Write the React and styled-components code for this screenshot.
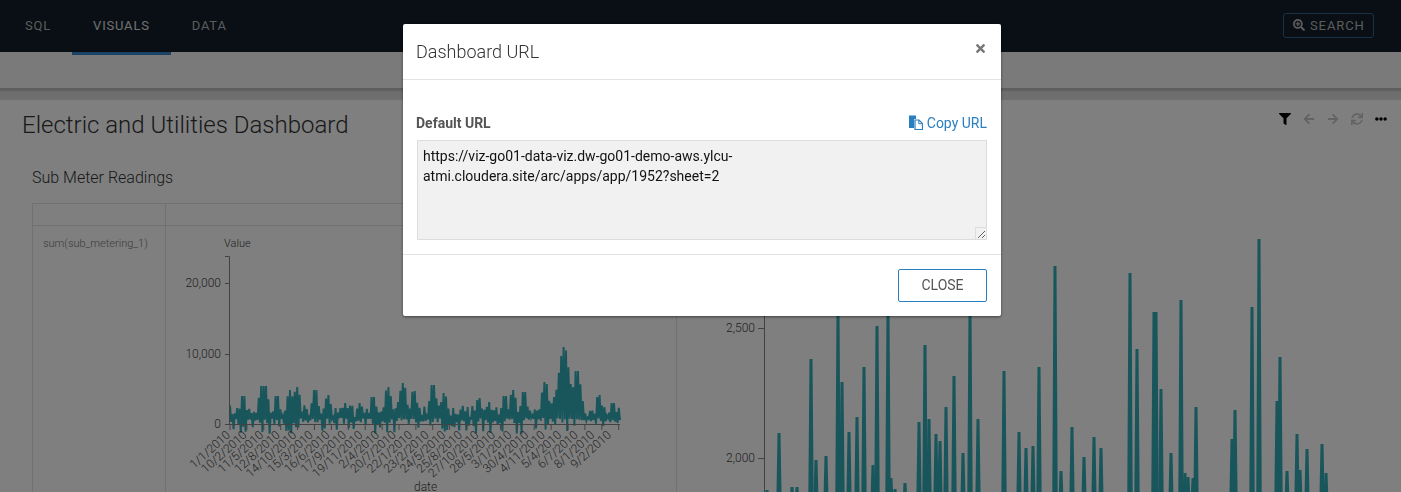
import React from 'react'
import styled, { createGlobalStyle } from 'styled-components'
import { FaSearchPlus, FaFilter, FaArrowLeft, FaArrowRight, FaSync, FaEllipsisH, FaTimes } from 'react-icons/fa'

const GlobalStyle = createGlobalStyle`
  html, body {
    margin: 0;
    height: 100%;
    overflow: hidden;
    background: #fff;
    font-family: Roboto, "Liberation Sans", sans-serif;
  }
  * { box-sizing: border-box; }
`

const TEAL = '#32acb8'
const AXIS = '#858585'
const TEXT = '#444'

const Page = styled.div`
  height: 492px;
  overflow: hidden;
`

const Nav = styled.nav`
  height: 52px;
  background: #121e28;
  display: flex;
  align-items: stretch;
  justify-content: space-between;
  padding: 0 27px 0 4px;
`

const Tabs = styled.div`
  display: flex;
`

const Tab = styled.div`
  height: 55px;
  padding: 0 21px 1px;
  display: flex;
  align-items: center;
  font-size: 13px;
  letter-spacing: 0.8px;
  color: ${p => (p.$active ? '#e0e0e0' : '#b8b8b8')};
  border-bottom: 3px solid ${p => (p.$active ? '#3584c8' : 'transparent')};
  position: relative;
  z-index: 1;
`

const SearchButton = styled.div`
  align-self: center;
  margin-bottom: 2px;
  width: 91px;
  height: 25px;
  border: 1px solid #34608a;
  border-radius: 3px;
  display: flex;
  align-items: center;
  gap: 5px;
  padding-left: 9px;
  font-size: 13px;
  letter-spacing: 0.9px;
  color: #b8b8b8;
  svg { width: 12px; height: 12px; }
`

const SubBar = styled.div`
  height: 36px;
  background: #f4f4f4;
`

const Band = styled.div`
  height: 12px;
  background: linear-gradient(#bcbcbc 0, #bcbcbc 2px, #dcdcdc 4px, #dedede 100%);
`

const Panel = styled.section`
  margin-left: 2px;
  height: 392px;
  background: #fff;
  padding: 0 0 0 20px;
`

const TitleRow = styled.div`
  height: 48px;
  display: flex;
  align-items: flex-start;
  justify-content: space-between;
  padding: 11px 14px 0 0;
`

const Title = styled.h1`
  margin: 0;
  font-size: 24px;
  line-height: 29px;
  font-weight: 300;
  color: #333;
`

const Tools = styled.div`
  display: flex;
  align-items: center;
  gap: 12px;
  height: 15px;
  color: #000;
`

const Tool = styled.span`
  display: flex;
  color: ${p => (p.$muted ? '#c6c6c6' : '#000')};
  svg { width: 12px; height: 12px; }
`

const ChartTitle = styled.h2`
  margin: 0 0 0 10px;
  height: 55px;
  padding-top: 20px;
  font-size: 16px;
  line-height: 19px;
  font-weight: 300;
  color: #333;
`

const TrellisHead = styled.div`
  margin-left: 10px;
  width: 960px;
  height: 23px;
  border: 1px solid #dfe3e8;
  display: grid;
  grid-template-columns: 133px 1fr;
`

const HeadCell = styled.div`
  border-right: 1px solid #dfe3e8;
  &:last-child { border-right: 0; }
`

const TrellisRow = styled.div`
  margin-left: 10px;
  display: grid;
  grid-template-columns: 133px 511px 1fr;
  height: 266px;
  border-left: 1px solid #dfe3e8;
`

const RowLabel = styled.div`
  border-right: 1px solid #dfe3e8;
  padding: 11px 0 0 10px;
  font-size: 11px;
  line-height: 13px;
  font-weight: 300;
  color: #777;
`

const ChartCell = styled.div`
  border-right: 1px solid #dfe3e8;
  &:last-child { border-right: 0; }
  svg { display: block; overflow: visible; }
  text {
    font-family: Roboto, "Liberation Sans", sans-serif;
    font-weight: 300;
    fill: ${TEXT};
  }
`

const Overlay = styled.div`
  position: fixed;
  inset: 0;
  z-index: 10;
  background: rgba(0, 0, 0, 0.5);
  display: flex;
  align-items: flex-start;
  justify-content: center;
  padding: 24px 0 0 3px;
`

const Modal = styled.div`
  width: 598px;
  height: 292px;
  background: #fff;
  border-radius: 2px;
  box-shadow: 0 1px 3px rgba(0, 0, 0, 0.5);
  display: flex;
  flex-direction: column;
`

const ModalHeader = styled.header`
  height: 56px;
  border-bottom: 1px solid #e2e2e2;
  padding: 17px 14px 0 13px;
  display: flex;
  justify-content: space-between;
  align-items: flex-start;
`

const ModalTitle = styled.h3`
  margin: 0;
  font-size: 18px;
  line-height: 22px;
  font-weight: 300;
  color: #333;
`

const CloseX = styled.span`
  display: flex;
  margin: 1px 0 0;
  color: #777;
  svg { width: 13px; height: 13px; }
`

const ModalBody = styled.div`
  flex: 1;
  padding: 33px 14px 0;
`

const FieldHead = styled.div`
  display: flex;
  justify-content: space-between;
  align-items: center;
  height: 19px;
  margin-bottom: 8px;
`

const FieldLabel = styled.label`
  font-size: 14px;
  font-weight: 700;
  color: #555;
  margin-left: -1px;
`

const CopyLink = styled.a`
  display: flex;
  align-items: center;
  gap: 4px;
  font-size: 14px;
  color: #2a7fc0;
  svg { width: 14px; height: 15px; }
`

const UrlField = styled.div`
  position: relative;
  height: 100px;
  /* the boxed resize grip in the corner */
  &::after {
    content: '';
    position: absolute;
    right: 1px;
    bottom: 1px;
    width: 10px;
    height: 11px;
    border-left: 1px solid #ddd;
    border-top: 1px solid #ddd;
    pointer-events: none;
  }
`

const UrlBox = styled.textarea`
  display: block;
  width: 100%;
  height: 100px;
  margin: 0;
  padding: 5px 5px;
  border: 1px solid #ddd;
  border-radius: 0;
  background: #f1f1f1;
  color: #111;
  font-family: Roboto, "Liberation Sans", sans-serif;
  font-size: 14px;
  line-height: 20px;
  outline: none;
`

const ModalFooter = styled.footer`
  height: 62px;
  border-top: 1px solid #e2e2e2;
  padding: 14px 14px 0;
  display: flex;
  justify-content: flex-end;
`

const CloseButton = styled.button`
  width: 89px;
  height: 33px;
  padding: 0 0 2px;
  background: #fff;
  border: 1px solid #2a7fc0;
  border-radius: 2px;
  font-family: Roboto, "Liberation Sans", sans-serif;
  font-size: 14px;
  color: #555;
`

// small seeded generator so the wave form stays the same on every load
const seeded = seed => () => {
  seed = (seed * 16807) % 2147483647
  return seed / 2147483647
}

const LEFT_PEAKS = [
  [230, 408], [238, 408], [243, 396], [262, 386], [265, 386], [277, 396], [290, 390], [297, 387],
  [315, 390], [328, 395], [345, 403], [360, 403], [373, 397], [388, 387], [398, 402], [403, 383],
  [414, 391], [433, 385], [444, 393], [462, 410], [468, 416], [479, 398], [489, 402], [505, 396],
  [513, 390], [524, 392], [545, 382], [554, 397], [564, 347], [572, 394], [577, 371], [599, 395],
  [613, 403], [620, 412],
]

const buildLeftLine = () => {
  const rand = seeded(4711)
  const pts = []
  for (let x = 230, i = 0; x <= 621; x += 1.2, i++) {
    let y
    if (i % 2) {
      y = rand() > 0.75 ? 424 + rand() * 10 : 418 + rand() * 6
    } else {
      const cap = Math.min(...LEFT_PEAKS.map(([px, py]) => py + Math.max(0, Math.abs(x - px) - 1.5) * 7))
      y = Math.min(cap, 405 + rand() * 13)
    }
    pts.push(`${x.toFixed(1)},${y.toFixed(1)}`)
  }
  return pts.join(' ')
}

const DATES = [
  '1/1/2010', '10/2/2010', '11/5/2010', '12/8/2010', '14/10/2010', '15/3/2010', '16/6/2010', '17/9/2010',
  '19/11/2010', '2/4/2010', '20/7/2010', '22/1/2010', '23/2/2010', '24/5/2010', '25/8/2010', '27/10/2010',
  '28/5/2010', '3/1/2010', '30/4/2010', '4/11/2010', '5/4/2010', '6/7/2010', '8/1/2010', '9/2/2010',
]

const LeftChart = () => (
  <svg width="510" height="266" viewBox="166 226 510 266">
    <text x="224" y="247" fontSize="11">Value</text>
    <polyline points={buildLeftLine()} fill="none" stroke={TEAL} strokeWidth="2" />
    <path d="M225 256.500H229.500V424.500H620" fill="none" stroke={AXIS} strokeWidth="1" />
    {[[283, '20,000'], [354, '10,000'], [424, '0']].map(([y, label]) => (
      <g key={label}>
        <path d={`M225 ${y + 0.5}H229`} stroke={AXIS} />
        <text x="221" y={y + 4} fontSize="12" textAnchor="end">{label}</text>
      </g>
    ))}
    {DATES.map((d, i) => {
      const tick = 230 + i * 16.9
      const x = 231 + i * 16.56
      return (
        <g key={d}>
          <path d={`M${tick} 424V430`} stroke={AXIS} />
          <text x={x} y="436" fontSize="12" textAnchor="end" transform={`rotate(-42 ${x} 436)`}>{d}</text>
        </g>
      )
    })}
    <text x="414" y="491" fontSize="12">date</text>
  </svg>
)

const SPIKES = [
  [767, 490], [779, 433], [792, 487], [797, 487], [811, 359], [816, 460], [826, 456], [838, 310],
  [842, 382], [849, 432], [857, 417], [864, 367], [873, 465], [877, 326], [888, 310], [891, 478],
  [895, 489], [905, 483], [919, 422], [925, 345], [929, 419], [936, 434], [940, 441], [946, 407],
  [954, 376], [963, 453], [970, 310], [978, 419], [1004, 371], [1019, 432], [1026, 448], [1033, 446],
  [1039, 367], [1055, 266], [1061, 471], [1072, 427], [1084, 457], [1094, 437], [1101, 448],
  [1130, 273], [1137, 349], [1154, 312], [1156, 312], [1161, 389], [1171, 453], [1181, 300],
  [1185, 473], [1188, 477], [1193, 478], [1196, 407], [1232, 439], [1235, 410], [1252, 307],
  [1259, 239], [1277, 401], [1280, 357], [1287, 471], [1297, 434], [1300, 470], [1307, 449], [1322, 444], [1326, 473],
]

const RightChart = () => (
  <svg width="723" height="266" viewBox="677 226 723 266">
    {SPIKES.map(([x, y]) => (
      <path
        key={`${x}-${y}`}
        d={`M${x - 1.3} 510L${x} ${y}L${x + 1.3} 510`}
        fill={TEAL}
        stroke={TEAL}
        strokeWidth="3"
        strokeLinejoin="bevel"
      />
    ))}
    <path d="M764.500 226V492" fill="none" stroke={AXIS} />
    {[[328, '2,500'], [458, '2,000']].map(([y, label]) => (
      <g key={label}>
        <path d={`M758 ${y + 0.5}H764`} stroke={AXIS} />
        <text x="755" y={y + 4} fontSize="12" textAnchor="end">{label}</text>
      </g>
    ))}
  </svg>
)

const CopyIcon = () => (
  <svg viewBox="0 0 14 15">
    <path d="M0 0.500h7v3.500H5v9H0z" fill="currentColor" />
    <path d="M6 5h4l3.500 3.500v6H6z" fill="none" stroke="currentColor" strokeWidth="1.200" />
    <path d="M9.800 5v3.700H13.500" fill="none" stroke="currentColor" strokeWidth="1" />
  </svg>
)

const App = () => (
  <Page>
    <GlobalStyle />
    <Nav>
      <Tabs>
        <Tab>SQL</Tab>
        <Tab $active>VISUALS</Tab>
        <Tab>DATA</Tab>
      </Tabs>
      <SearchButton><FaSearchPlus /> SEARCH</SearchButton>
    </Nav>
    <SubBar />
    <Band />
    <Panel>
      <TitleRow>
        <Title>Electric and Utilities Dashboard</Title>
        <Tools>
          <Tool><FaFilter /></Tool>
          <Tool $muted><FaArrowLeft /></Tool>
          <Tool $muted><FaArrowRight /></Tool>
          <Tool $muted><FaSync /></Tool>
          <Tool><FaEllipsisH /></Tool>
        </Tools>
      </TitleRow>
      <ChartTitle>Sub Meter Readings</ChartTitle>
      <TrellisHead>
        <HeadCell />
        <HeadCell />
      </TrellisHead>
      <TrellisRow>
        <RowLabel>sum(sub_metering_1)</RowLabel>
        <ChartCell><LeftChart /></ChartCell>
        <ChartCell><RightChart /></ChartCell>
      </TrellisRow>
    </Panel>
    <Overlay>
      <Modal>
        <ModalHeader>
          <ModalTitle>Dashboard URL</ModalTitle>
          <CloseX><FaTimes /></CloseX>
        </ModalHeader>
        <ModalBody>
          <FieldHead>
            <FieldLabel>Default URL</FieldLabel>
            <CopyLink><CopyIcon /> Copy URL</CopyLink>
          </FieldHead>
          <UrlField>
            <UrlBox
              readOnly
              value={'https://viz-go01-data-viz.dw-go01-demo-aws.ylcu-\natmi.cloudera.site/arc/apps/app/1952?sheet=2'}
            />
          </UrlField>
        </ModalBody>
        <ModalFooter>
          <CloseButton>CLOSE</CloseButton>
        </ModalFooter>
      </Modal>
    </Overlay>
  </Page>
)

export default App
